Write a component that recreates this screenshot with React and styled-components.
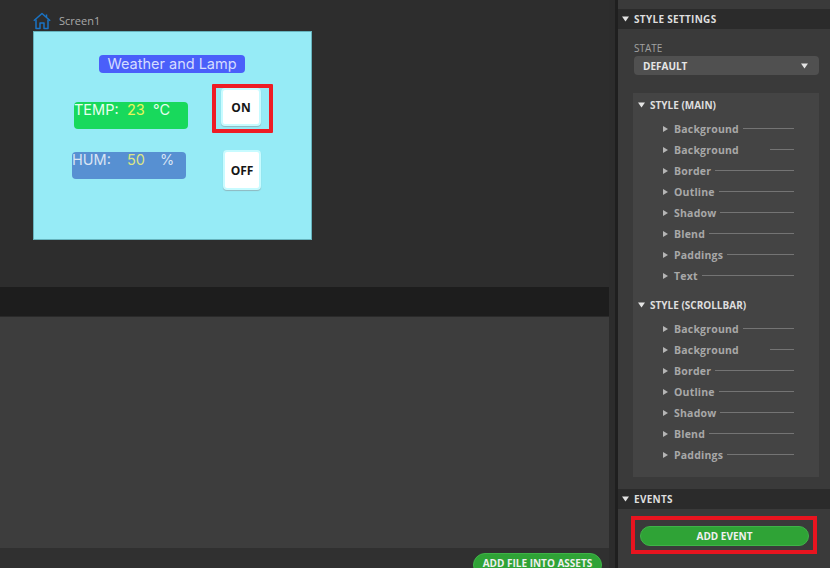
import React from 'react';
import styled, { createGlobalStyle } from 'styled-components';

const GlobalStyle = createGlobalStyle`
html, body {
    margin: 0;
    padding: 0;
    background: #2b2b2b;
}
* {
    box-sizing: border-box;
}
`;

const Page = styled.div`
width: 830px;
height: 568px;
display: flex;
overflow: hidden;
font-family: "Open Sans", "Noto Sans", sans-serif;
background: #232323;
`;

const LeftColumn = styled.div`
width: 609px;
height: 568px;
display: flex;
flex-direction: column;
flex-shrink: 0;
`;

const Canvas = styled.div`
height: 287px;
background: #2d2d2d;
padding: 10px 0 0 33px;
`;

const ScreenTitle = styled.div`
height: 21px;
display: flex;
align-items: center;
gap: 8px;
color: #a9a9a9;
font-size: 11px;
`;

const MockScreen = styled.div`
position: relative;
width: 279px;
height: 209px;
background: #96ebf6;
border: 1px solid #66b3bd;
font-family: "Inter", "Open Sans", sans-serif;
`;

const MockTitle = styled.div`
position: absolute;
left: 65px;
top: 23px;
width: 146px;
height: 18px;
border-radius: 4px;
background: #4a5ffa;
color: #d5dcff;
font-size: 14.5px;
line-height: 17px;
text-align: center;
white-space: nowrap;
`;

const ValuePill = styled.div`
position: absolute;
left: ${props => props.$left}px;
top: ${props => props.$top}px;
width: 114px;
height: 27px;
border-radius: 4px;
background: ${props => props.$bg};
color: ${props => props.$color};
font-size: 14.5px;
`;

const PillText = styled.span`
position: absolute;
left: ${props => props.$left}px;
top: -2px;
line-height: 20px;
color: ${props => props.$color || 'inherit'};
white-space: nowrap;
`;

const MockButton = styled.div`
position: absolute;
left: ${props => props.$left}px;
top: ${props => props.$top}px;
width: ${props => props.$width}px;
height: ${props => props.$height}px;
display: flex;
align-items: center;
justify-content: center;
background: #ffffff;
border: 2px solid #c8fbff;
border-radius: 4px;
box-shadow: 0 1px 1px #8fb9c0;
color: #161616;
font-family: "Open Sans", sans-serif;
font-weight: 700;
font-size: 12px;
`;

const RedMark = styled.div`
position: absolute;
left: 178px;
top: 52px;
width: 61px;
height: 49px;
border: 4px solid #ee1c25;
border-radius: 1px;
`;

const DarkBar = styled.div`
height: 30px;
background: #1d1d1d;
border-bottom: 1px solid #2a2a2a;
`;

const AssetsPanel = styled.div`
height: 231px;
background: #3d3d3d;
`;

const AssetsFooter = styled.div`
height: 20px;
background: #303030;
display: flex;
justify-content: flex-end;
padding: 5px 7px 0 0;
`;

const GreenButton = styled.button`
border: 1px solid #3fb348;
background: #2fa336;
color: #f0f0f0;
font-family: inherit;
font-weight: 700;
padding: 0;
`;

const AssetsButton = styled(GreenButton)`
width: 129px;
height: 24px;
border-radius: 12px;
font-size: 10px;
line-height: 18px;
padding-bottom: 4px;
flex-shrink: 0;
`;

const Gutter = styled.div`
width: 9px;
flex-shrink: 0;
background: linear-gradient(to right, #2c2c2c 0 6px, #1f1f1f 6px);
`;

const Sidebar = styled.div`
width: 212px;
height: 568px;
flex-shrink: 0;
background: #3a3a3a;
padding-top: 9px;
display: flex;
flex-direction: column;
`;

const SectionHeader = styled.div`
height: 20px;
display: flex;
align-items: center;
gap: 5px;
padding-left: 4px;
background: #2b2b2b;
color: #dedede;
font-size: 10px;
font-weight: 700;
letter-spacing: 0.3px;
`;

const StateBlock = styled.div`
height: 64px;
padding: 11px 11px 0 16px;
`;

const StateLabel = styled.div`
color: #a2a2a2;
font-size: 10px;
line-height: 16px;
`;

const Select = styled.div`
height: 19px;
display: flex;
align-items: center;
justify-content: space-between;
padding: 0 11px 0 9px;
border-radius: 4px;
background: #505050;
color: #e6e6e6;
font-size: 10px;
font-weight: 700;
`;

const StyleGroups = styled.div`
width: 186px;
height: 384px;
margin-left: 15px;
padding-top: 1px;
background: #444444;
`;

const GroupTitle = styled.div`
height: 21px;
display: flex;
align-items: center;
gap: 5px;
padding-left: 5px;
color: #dedede;
font-size: 10px;
font-weight: 700;
`;

const Group = styled.div`
margin-bottom: ${props => props.$gap}px;
`;

const Rows = styled.div`
padding-top: 3px;
`;

const Row = styled.div`
height: 21px;
display: flex;
align-items: center;
padding: 0 25px 0 30px;
color: #a8a8a8;
font-size: 10.5px;
font-weight: 700;
letter-spacing: 0.2px;
`;

const RowLabel = styled.span`
margin: 0 4px 0 6px;
`;

const RowLine = styled.span`
height: 1px;
flex: 1;
margin-left: ${props => (props.$short ? 27 : 0)}px;
background: #747474;
`;

const EventsHeader = styled(SectionHeader)`
margin-top: 12px;
`;

const EventMark = styled.div`
width: 186px;
height: 38px;
margin: 7px 0 0 13px;
padding: 6px 4px 0 5px;
border: 4px solid #e8141f;
border-bottom-width: 4px;
`;

const AddEvent = styled(GreenButton)`
display: block;
width: 100%;
height: 20px;
border-radius: 10px;
font-size: 10px;
`;

const Triangle = styled.svg`
flex-shrink: 0;
fill: ${props => props.$fill || '#e4e4e4'};
`;

const DownArrow = ({ fill }) => (
    <Triangle $fill={fill} width="7" height="6" viewBox="0 0 7 6">
        <path d="M0 0.5H7L3.5 5.5Z" />
    </Triangle>
);

const RightArrow = () => (
    <Triangle $fill="#b5b5b5" width="5" height="6" viewBox="0 0 5 6">
        <path d="M0 0L5 3L0 6Z" />
    </Triangle>
);

const HomeIcon = () => (
    <svg width="18" height="18" viewBox="0 0 18 18" fill="none" stroke="#1a73c4" strokeWidth="1.5" strokeLinejoin="round">
        <path d="M0.8 8.8L9 1.5L17.2 8.8" />
        <path d="M3 7.5V16.5H7V11H11V16.5H15V7.5" />
        <path d="M13.5 2.5V5" />
    </svg>
);

const mainRows = [
    { name: 'Background' },
    { name: 'Background', short: true },
    { name: 'Border' },
    { name: 'Outline' },
    { name: 'Shadow' },
    { name: 'Blend' },
    { name: 'Paddings' },
    { name: 'Text' },
];

const scrollRows = mainRows.slice(0, 7);

const StyleGroup = ({ title, rows, gap }) => (
    <Group $gap={gap}>
        <GroupTitle><DownArrow />{title}</GroupTitle>
        <Rows>
            {rows.map((row, i) => (
                <Row key={i}>
                    <RightArrow />
                    <RowLabel>{row.name}</RowLabel>
                    <RowLine $short={row.short} />
                </Row>
            ))}
        </Rows>
    </Group>
);

const App = () => {
    return (
        <Page>
            <GlobalStyle />
            <LeftColumn>
                <Canvas>
                    <ScreenTitle><HomeIcon />Screen1</ScreenTitle>
                    <MockScreen>
                        <MockTitle>Weather and Lamp</MockTitle>
                        <ValuePill $left={40} $top={70} $bg="#18d95c" $color="#e6fff0">
                            <PillText $left={0}>TEMP:</PillText>
                            <PillText $left={53} $color="#e8f65a">23</PillText>
                            <PillText $left={79}>°C</PillText>
                        </ValuePill>
                        <ValuePill $left={38} $top={120} $bg="#5790d2" $color="#d8e4f4">
                            <PillText $left={0}>HUM:</PillText>
                            <PillText $left={55} $color="#dce685">50</PillText>
                            <PillText $left={88}>%</PillText>
                        </ValuePill>
                        <MockButton $left={187} $top={56} $width={40} $height={38}>ON</MockButton>
                        <MockButton $left={189} $top={118} $width={38} $height={40}>OFF</MockButton>
                        <RedMark />
                    </MockScreen>
                </Canvas>
                <DarkBar />
                <AssetsPanel />
                <AssetsFooter>
                    <AssetsButton>ADD FILE INTO ASSETS</AssetsButton>
                </AssetsFooter>
            </LeftColumn>
            <Gutter />
            <Sidebar>
                <SectionHeader><DownArrow />STYLE SETTINGS</SectionHeader>
                <StateBlock>
                    <StateLabel>STATE</StateLabel>
                    <Select>DEFAULT<DownArrow /></Select>
                </StateBlock>
                <StyleGroups>
                    <StyleGroup title="STYLE (MAIN)" rows={mainRows} gap={8} />
                    <StyleGroup title="STYLE (SCROLLBAR)" rows={scrollRows} gap={0} />
                </StyleGroups>
                <EventsHeader><DownArrow />EVENTS</EventsHeader>
                <EventMark>
                    <AddEvent>ADD EVENT</AddEvent>
                </EventMark>
            </Sidebar>
        </Page>
    )
}
export default App
